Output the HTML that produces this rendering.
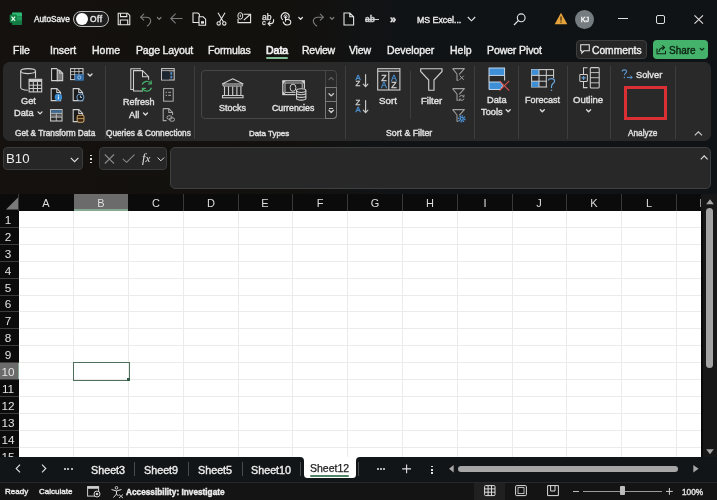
<!DOCTYPE html>
<html><head><meta charset="utf-8"><style>
html,body{margin:0;padding:0;width:717px;height:500px;overflow:hidden;background:#111315}
body{position:relative;font-family:"Liberation Sans", sans-serif}
.t{position:absolute;line-height:1;white-space:nowrap;will-change:transform;-webkit-text-stroke:0.4px currentColor;font-variant-ligatures:none}
svg{overflow:visible}
</style></head><body>
<div style="position:absolute;left:0;top:0;width:717px;height:500px;background:linear-gradient(90deg,#14110e 0%,#13110e 40%,#101316 56%,#0f1316 100%)"></div><svg style="position:absolute;left:9px;top:12px" width="14" height="14" viewBox="0 0 14 14" fill="none">
<rect x="3" y="0.4" width="10" height="12.6" rx="1" fill="#185c37"/>
<rect x="3" y="0.4" width="10" height="4.2" rx="1" fill="#2db873"/>
<rect x="3" y="4.6" width="10" height="4.2" fill="#1f9a5c"/>
<rect x="3" y="8.8" width="10" height="4.2" rx="1" fill="#137a43"/>
<rect x="0.7" y="2.6" width="7.2" height="8.2" rx="0.8" fill="#128245"/>
<path d="M2.5 4.6 L6.1 8.8 M6.1 4.6 L2.5 8.8" stroke="#e8fff0" stroke-width="1.15"/>
</svg><div class="t" style="left:33.71px;top:16.00px;font-size:8.25px;color:#e8e8e8;font-weight:400;transform:scaleX(1.0000);transform-origin:0 0;">AutoSave</div><div style="position:absolute;left:73.3px;top:10.8px;width:35.60px;height:16.20px;box-sizing:border-box;border:1.6px solid #bdbdbd;border-radius:8.1px;background:#1e1e1e"></div><div style="position:absolute;left:76.0px;top:12.9px;width:11.8px;height:11.8px;border-radius:50%;background:#fff"></div><div class="t" style="left:90.10px;top:15.00px;font-size:8.40px;color:#e8e8e8;font-weight:400;transform:scaleX(1.0000);transform-origin:0 0;letter-spacing:0.5px">Off</div><svg style="position:absolute;left:117px;top:12px" width="14" height="14" viewBox="0 0 14 14" fill="none"><path d="M1.2 1.2 H10.6 L12.8 3.4 V12.8 H1.2 Z" stroke="#e6e6e6" stroke-width="1.1"/>
<path d="M3.5 1.2 V4.6 H9.8 V1.2" stroke="#e6e6e6" stroke-width="1.1"/><path d="M3.3 12.8 V8 H10.7 V12.8" stroke="#e6e6e6" stroke-width="1.1"/></svg><svg style="position:absolute;left:139px;top:12px" width="14" height="14" viewBox="0 0 14 14" fill="none"><path d="M1.8 5.2 H7.2 C9.9 5.2 11.7 7 11.7 9.1 C11.7 10.6 11 11.5 9.9 12.6 L8.4 14" stroke="#7c7c7c" stroke-width="1.15" stroke-linecap="round"/><path d="M4.7 2.2 L1.7 5.2 L4.7 8.2" stroke="#7c7c7c" stroke-width="1.15" stroke-linecap="round" stroke-linejoin="round"/></svg><svg style="position:absolute;left:0;top:0" width="717" height="500" fill="none"><path d="M157.40 17.50 L159.20 19.30 L161.00 17.50" stroke="#7c7c7c" stroke-width="1.2" stroke-linecap="round" stroke-linejoin="round"/></svg><svg style="position:absolute;left:170px;top:13px" width="13" height="11" viewBox="0 0 13 11" fill="none"><path d="M0.8 5.5 H12.5 M5.6 0.7 L0.8 5.5 L5.6 10.3" stroke="#7c7c7c" stroke-width="1.1"/></svg><svg style="position:absolute;left:192px;top:12px" width="15" height="14" viewBox="0 0 15 14" fill="none"><path d="M1 1 H6 L7.4 2.4 V10.5 H1 Z" stroke="#e6e6e6" stroke-width="1.1"/>
<path d="M7 4.8 H11.2 L13.6 7.2 V13.2 H7 Z" stroke="#e6e6e6" stroke-width="1.1" fill="#13110e"/><rect x="9" y="9.2" width="3" height="2.4" fill="#e6e6e6"/></svg><svg style="position:absolute;left:216px;top:12px" width="11" height="14" viewBox="0 0 11 14" fill="none"><path d="M2 0.8 L7.5 10 M9 0.8 L3.5 10" stroke="#e6e6e6" stroke-width="1.1"/>
<circle cx="2.7" cy="11.4" r="1.7" stroke="#e6e6e6" stroke-width="1.1"/><circle cx="8.3" cy="11.4" r="1.7" stroke="#e6e6e6" stroke-width="1.1"/></svg><svg style="position:absolute;left:237px;top:12px" width="15" height="12" viewBox="0 0 15 12" fill="none"><path d="M6.6 2.2 H13.6 V10.6 H1 V7" stroke="#e6e6e6" stroke-width="1.1"/><path d="M6.8 8.2 L13.2 2.5" stroke="#e6e6e6" stroke-width="1.1"/>
<rect x="1" y="0.7" width="4.6" height="6.4" rx="2.3" stroke="#e6e6e6" stroke-width="1"/><path d="M3.3 2.6 V5" stroke="#e6e6e6" stroke-width="0.9"/></svg><div class="t" style="left:261.98px;top:13.00px;font-size:8.60px;color:#e6e6e6;font-weight:400;transform:scaleX(1.0000);transform-origin:0 0;-webkit-text-stroke:0.25px #e6e6e6">ab</div><div class="t" style="left:262.34px;top:19.00px;font-size:7.60px;color:#e6e6e6;font-weight:400;transform:scaleX(1.0000);transform-origin:0 0;-webkit-text-stroke:0.25px #e6e6e6">c</div><svg style="position:absolute;left:267px;top:18.5px" width="8" height="7" viewBox="0 0 8 7" fill="none"><path d="M6.6 0.5 V1.8 C6.6 3.6 5.6 4.6 3.8 4.6 H1.2 M3 2.6 L1 4.6 L3 6.6" stroke="#e6e6e6" stroke-width="1.1" stroke-linecap="round" stroke-linejoin="round"/></svg><svg style="position:absolute;left:280px;top:12px" width="13" height="14" viewBox="0 0 13 14" fill="none"><path d="M2.6 7.6 A3.9 3.9 0 1 1 8.8 6.2" stroke="#e6e6e6" stroke-width="1.1" stroke-linecap="round"/><circle cx="5.5" cy="4.4" r="1.5" stroke="#e6e6e6" stroke-width="1"/>
<path d="M5.5 4.6 V9.2 M5.5 7.6 C8 7 10.8 7.6 10.8 10 C10.8 12.2 9.5 13 7.2 13 C5.2 13 3.8 11.6 3.2 10" stroke="#e6e6e6" stroke-width="1.1" stroke-linecap="round"/></svg><svg style="position:absolute;left:0;top:0" width="717" height="500" fill="none"><path d="M298.80 17.50 L300.60 19.30 L302.40 17.50" stroke="#e6e6e6" stroke-width="1.2" stroke-linecap="round" stroke-linejoin="round"/></svg><svg style="position:absolute;left:311px;top:12px" width="14" height="14" viewBox="0 0 14 14" fill="none"><path d="M12.2 5.2 H6.8 C4.1 5.2 2.3 7 2.3 9.1 C2.3 10.6 3 11.5 4.1 12.6 L5.6 14" stroke="#7c7c7c" stroke-width="1.15" stroke-linecap="round"/><path d="M9.3 2.2 L12.3 5.2 L9.3 8.2" stroke="#7c7c7c" stroke-width="1.15" stroke-linecap="round" stroke-linejoin="round"/></svg><svg style="position:absolute;left:0;top:0" width="717" height="500" fill="none"><path d="M330.20 17.50 L332.00 19.30 L333.80 17.50" stroke="#7c7c7c" stroke-width="1.2" stroke-linecap="round" stroke-linejoin="round"/></svg><svg style="position:absolute;left:343px;top:12px" width="12" height="14" viewBox="0 0 12 14" fill="none"><path d="M1 1 H6.8 L10.6 4.8 V13 H1 Z M6.8 1 V4.8 H10.6" stroke="#e6e6e6" stroke-width="1.1"/></svg><div class="t" style="left:365.49px;top:15.00px;font-size:8.50px;color:#cfcfcf;font-weight:700;transform:scaleX(1.0000);transform-origin:0 0;">ab</div><div style="position:absolute;left:364.5px;top:19.2px;width:14.50px;height:1.10px;background:#cfcfcf"></div><div class="t" style="left:390.14px;top:14.00px;font-size:11.00px;color:#e6e6e6;font-weight:700;transform:scaleX(1.0000);transform-origin:0 0;">&#187;</div><div class="t" style="left:417.08px;top:16.00px;font-size:8.75px;color:#e8e8e8;font-weight:400;transform:scaleX(1.0000);transform-origin:0 0;">MS Excel...</div><svg style="position:absolute;left:467px;top:16px" width="10" height="7" viewBox="0 0 10 7" fill="none"><path d="M0.8 1 L4.5 4.8 L8.2 1" stroke="#e6e6e6" stroke-width="1.1"/></svg><svg style="position:absolute;left:513px;top:13px" width="14" height="13" viewBox="0 0 14 13" fill="none"><circle cx="8.2" cy="4.8" r="3.9" stroke="#e6e6e6" stroke-width="1.1"/><path d="M5.3 7.7 L1 12" stroke="#e6e6e6" stroke-width="1.2"/></svg><svg style="position:absolute;left:554px;top:12px" width="14" height="13" viewBox="0 0 14 13" fill="none"><path d="M7 0.8 L13.3 12.2 H0.7 Z" fill="#e5a33b"/><rect x="6.4" y="4.5" width="1.2" height="4.2" fill="#3a2a10"/><rect x="6.4" y="9.6" width="1.2" height="1.2" fill="#3a2a10"/></svg><div style="position:absolute;left:575px;top:9.7px;width:19.4px;height:19.4px;border-radius:50%;background:#767d80"></div><div class="t" style="left:484.60px;width:200px;text-align:center;top:16.00px;font-size:7.20px;color:#f0f0f0;font-weight:400;transform:scaleX(1.0000);transform-origin:50% 0;">KJ</div><div style="position:absolute;left:618px;top:18.3px;width:9.50px;height:1.00px;background:#e0e0e0"></div><div style="position:absolute;left:656px;top:15px;width:9px;height:8.5px;box-sizing:border-box;border:1.1px solid #e0e0e0;border-radius:2px"></div><svg style="position:absolute;left:693.5px;top:14.8px" width="10" height="9" viewBox="0 0 10 9" fill="none"><path d="M0.5 0.3 L9 8.7 M9 0.3 L0.5 8.7" stroke="#e0e0e0" stroke-width="1.1"/></svg><div class="t" style="left:12.97px;top:45.00px;font-size:10.50px;color:#ececec;font-weight:400;transform:scaleX(1.0000);transform-origin:0 0;letter-spacing:0px">File</div><div class="t" style="left:49.97px;top:45.00px;font-size:10.50px;color:#ececec;font-weight:400;transform:scaleX(1.0000);transform-origin:0 0;letter-spacing:0px">Insert</div><div class="t" style="left:91.87px;top:45.00px;font-size:10.50px;color:#ececec;font-weight:400;transform:scaleX(1.0000);transform-origin:0 0;letter-spacing:0px">Home</div><div class="t" style="left:136.07px;top:45.00px;font-size:10.50px;color:#ececec;font-weight:400;transform:scaleX(1.0000);transform-origin:0 0;letter-spacing:-0.17px">Page Layout</div><div class="t" style="left:208.27px;top:45.00px;font-size:10.50px;color:#ececec;font-weight:400;transform:scaleX(1.0000);transform-origin:0 0;letter-spacing:-0.14px">Formulas</div><div class="t" style="left:265.67px;top:45.00px;font-size:10.50px;color:#f4f4f4;font-weight:400;transform:scaleX(1.0000);transform-origin:0 0;letter-spacing:0px;-webkit-text-stroke:0.7px #f4f4f4">Data</div><div class="t" style="left:302.27px;top:45.00px;font-size:10.50px;color:#ececec;font-weight:400;transform:scaleX(1.0000);transform-origin:0 0;letter-spacing:-0.26px">Review</div><div class="t" style="left:349.37px;top:45.00px;font-size:10.50px;color:#ececec;font-weight:400;transform:scaleX(1.0000);transform-origin:0 0;letter-spacing:-0.2px">View</div><div class="t" style="left:386.87px;top:45.00px;font-size:10.50px;color:#ececec;font-weight:400;transform:scaleX(1.0000);transform-origin:0 0;letter-spacing:-0.08px">Developer</div><div class="t" style="left:450.27px;top:45.00px;font-size:10.50px;color:#ececec;font-weight:400;transform:scaleX(1.0000);transform-origin:0 0;letter-spacing:0px">Help</div><div class="t" style="left:487.37px;top:45.00px;font-size:10.50px;color:#ececec;font-weight:400;transform:scaleX(1.0000);transform-origin:0 0;letter-spacing:-0.1px">Power Pivot</div><div style="position:absolute;left:266.3px;top:57.1px;width:21.50px;height:1.90px;background:#80bf96;border-radius:1px"></div><div style="position:absolute;left:576.1px;top:40.1px;width:70.70px;height:18.50px;box-sizing:border-box;border:1px solid #3e3e3e;border-radius:4px;background:#262626"></div><svg style="position:absolute;left:580px;top:44px" width="11" height="11" viewBox="0 0 11 11" fill="none"><path d="M0.7 0.7 H9.3 V6.8 H4 L1.8 9.2 V6.8 H0.7 Z" stroke="#e6e6e6" stroke-width="1.05"/></svg><div class="t" style="left:592.38px;top:46.00px;font-size:10.25px;color:#ececec;font-weight:400;transform:scaleX(1.0000);transform-origin:0 0;">Comments</div><div style="position:absolute;left:653px;top:40.1px;width:54.70px;height:18.50px;border-radius:4px;background:#45b26b"></div><svg style="position:absolute;left:655.5px;top:43.5px" width="11" height="11" viewBox="0 0 11 11" fill="none"><path d="M1 4.5 V9.8 H9.5 V6.8" stroke="#0d2614" stroke-width="1.05"/><path d="M3 8 C3 5 5 3.6 8 3.6 M6.3 1.4 L8.6 3.6 L6.3 5.8" stroke="#0d2614" stroke-width="1.05"/></svg><div class="t" style="left:669.20px;top:46.00px;font-size:10.00px;color:#0e2414;font-weight:400;transform:scaleX(1.0000);transform-origin:0 0;">Share</div><svg style="position:absolute;left:0;top:0" width="717" height="500" fill="none"><path d="M700.20 48.40 L702.00 50.20 L703.80 48.40" stroke="#0e2414" stroke-width="1.2" stroke-linecap="round" stroke-linejoin="round"/></svg><div style="position:absolute;left:3.3px;top:61.7px;width:707.50px;height:78.90px;border-radius:6.5px;background:#292929"></div><div style="position:absolute;left:105.3px;top:65.5px;width:1.00px;height:73.50px;background:#3d3d3d"></div><div style="position:absolute;left:194.0px;top:65.5px;width:1.00px;height:73.50px;background:#3d3d3d"></div><div style="position:absolute;left:345.1px;top:65.5px;width:1.00px;height:73.50px;background:#3d3d3d"></div><div style="position:absolute;left:474.0px;top:65.5px;width:1.00px;height:73.50px;background:#3d3d3d"></div><div style="position:absolute;left:517.9px;top:65.5px;width:1.00px;height:73.50px;background:#3d3d3d"></div><div style="position:absolute;left:566.5px;top:65.5px;width:1.00px;height:73.50px;background:#3d3d3d"></div><div style="position:absolute;left:610.3px;top:65.5px;width:1.00px;height:73.50px;background:#3d3d3d"></div><div style="position:absolute;left:674.8px;top:65.5px;width:1.00px;height:73.50px;background:#3d3d3d"></div><div class="t" style="left:14.81px;top:130.00px;font-size:8.25px;color:#e0e0e0;font-weight:400;transform:scaleX(1.0000);transform-origin:0 0;">Get &amp; Transform Data</div><div class="t" style="left:106.30px;top:130.00px;font-size:8.25px;color:#e0e0e0;font-weight:400;transform:scaleX(1.0000);transform-origin:0 0;">Queries &amp; Connections</div><div class="t" style="left:249.32px;top:130.00px;font-size:8.00px;color:#e0e0e0;font-weight:400;transform:scaleX(1.0000);transform-origin:0 0;">Data Types</div><div class="t" style="left:386.38px;top:129.00px;font-size:8.75px;color:#e0e0e0;font-weight:400;transform:scaleX(1.0000);transform-origin:0 0;">Sort &amp; Filter</div><div class="t" style="left:627.71px;top:130.00px;font-size:8.25px;color:#e0e0e0;font-weight:400;transform:scaleX(1.0000);transform-origin:0 0;">Analyze</div><svg style="position:absolute;left:20px;top:68px" width="23" height="25" viewBox="0 0 23 25" fill="none"><ellipse cx="8.1" cy="3.1" rx="7.4" ry="2.5" stroke="#cfcfcf" stroke-width="1.1"/>
<path d="M0.7 3.1 V19.5 C0.7 21 3.5 22.1 7.8 22.2" stroke="#cfcfcf" stroke-width="1.1"/><path d="M15.5 3.1 V10.2" stroke="#cfcfcf" stroke-width="1.1"/>
<rect x="9.1" y="11.3" width="12.6" height="12.6" fill="#292929" stroke="#cfcfcf" stroke-width="1.1"/>
<rect x="9.1" y="11.3" width="12.6" height="2.6" fill="#cfcfcf"/>
<path d="M9.1 17.2 H21.7 M9.1 20.5 H21.7 M13.3 13.9 V23.9 M17.5 13.9 V23.9" stroke="#cfcfcf" stroke-width="1"/></svg><div class="t" style="left:21.14px;top:97.00px;font-size:9.25px;color:#e0e0e0;font-weight:400;transform:scaleX(1.0000);transform-origin:0 0;">Get</div><div class="t" style="left:14.25px;top:109.00px;font-size:9.25px;color:#e0e0e0;font-weight:400;transform:scaleX(1.0000);transform-origin:0 0;">Data</div><svg style="position:absolute;left:0;top:0" width="717" height="500" fill="none"><path d="M38.00 111.90 L40.00 113.90 L42.00 111.90" stroke="#e0e0e0" stroke-width="1.3" stroke-linecap="round" stroke-linejoin="round"/></svg><svg style="position:absolute;left:51px;top:68px" width="13" height="14" viewBox="0 0 13 14" fill="none"><path d="M0.6 0.6 H5.6 L7 2 V12.6 H0.6 Z" fill="#1a1a1a" stroke="#cfcfcf" stroke-width="1.05"/>
<path d="M6.2 2.2 L8.6 2.2 L11.7 5.3 V12.6 H6.2 Z" fill="#7a7a7a" stroke="#cfcfcf" stroke-width="1.05"/><path d="M8.6 2.2 V5.3 H11.7" stroke="#cfcfcf" stroke-width="0.9"/></svg><svg style="position:absolute;left:50.4px;top:88.2px" width="14" height="14" viewBox="0 0 14 14" fill="none"><path d="M1.2 0.6 H6.8 L10.6 4.4 V12.6 H1.2 Z" fill="#1a1a1a" stroke="#cfcfcf" stroke-width="1.05"/><path d="M6.8 0.6 V4.4 H10.6" stroke="#cfcfcf" stroke-width="1.05"/><circle cx="8.4" cy="9.2" r="3.7" fill="#3a8ad0"/><rect x="7.9" y="6.9" width="1" height="1" fill="#dfefff"/><rect x="7.9" y="8.4" width="1" height="3" fill="#dfefff"/></svg><svg style="position:absolute;left:50.2px;top:108.8px" width="13" height="13" viewBox="0 0 13 13" fill="none"><rect x="0.6" y="0.6" width="11.4" height="11.4" stroke="#cfcfcf" stroke-width="1.05"/><rect x="1.1" y="1.1" width="10.4" height="3" fill="#3d6a90"/>
<rect x="1.1" y="5.4" width="10.4" height="2.6" fill="#6a6a6a"/><path d="M0.6 4.4 H12 M0.6 8.2 H12 M6.3 4.4 V12" stroke="#d0d0d0" stroke-width="0.8"/></svg><svg style="position:absolute;left:70.4px;top:68.4px" width="15" height="14" viewBox="0 0 15 14" fill="none"><rect x="0.6" y="0.6" width="12.4" height="11" fill="#1a1a1a" stroke="#cfcfcf" stroke-width="1.05"/><path d="M0.6 3.6 H13 M0.6 6.6 H13 M4.7 0.6 V11.6 M8.9 0.6 V11.6" stroke="#cfcfcf" stroke-width="0.8"/>
<rect x="4.8" y="6.2" width="9" height="6.5" rx="0.8" fill="#2f6aa6"/><circle cx="9.3" cy="9.5" r="1.6" stroke="#a9cdef" stroke-width="0.9"/></svg><svg style="position:absolute;left:0;top:0" width="717" height="500" fill="none"><path d="M88.00 74.00 L90.00 76.00 L92.00 74.00" stroke="#e0e0e0" stroke-width="1.3" stroke-linecap="round" stroke-linejoin="round"/></svg><svg style="position:absolute;left:71.5px;top:88.2px" width="14" height="14" viewBox="0 0 14 14" fill="none"><path d="M1.2 0.6 H6.8 L10.6 4.4 V12.6 H1.2 Z" fill="#1a1a1a" stroke="#cfcfcf" stroke-width="1.05"/><path d="M6.8 0.6 V4.4 H10.6" stroke="#cfcfcf" stroke-width="1.05"/><circle cx="8.4" cy="9.3" r="3.4" fill="#1a1a1a" stroke="#6ea2cf" stroke-width="1.05"/><path d="M8.4 7.6 V9.4 H10" stroke="#cfe3f5" stroke-width="0.9"/></svg><svg style="position:absolute;left:72px;top:108.6px" width="14" height="14" viewBox="0 0 14 14" fill="none"><path d="M1.2 0.6 H6.8 L10.6 4.4 V12.6 H1.2 Z" fill="#1a1a1a" stroke="#cfcfcf" stroke-width="1.05"/><path d="M6.8 0.6 V4.4 H10.6" stroke="#cfcfcf" stroke-width="1.05"/><rect x="5.2" y="6.2" width="6.8" height="7" rx="1.6" fill="#3a2410" stroke="#c9a468" stroke-width="1.05"/><path d="M5.2 9.6 H12" stroke="#c9a468" stroke-width="0.9"/></svg><svg style="position:absolute;left:129.5px;top:68px" width="25" height="25" viewBox="0 0 25 25" fill="none"><path d="M3 21.5 H0.8 V0.8 H11" stroke="#cfcfcf" stroke-width="1.05"/>
<path d="M3.5 2.6 H12.5 L18.6 8.7 V23 H3.5 Z" stroke="#cfcfcf" stroke-width="1.05" fill="#292929"/><path d="M12.5 2.6 V8.7 H18.6" stroke="#cfcfcf" stroke-width="1.05"/>
<circle cx="16.8" cy="18.2" r="6.8" fill="#292929"/>
<path d="M12.2 16.6 A4.8 4.8 0 0 1 20.9 15.6 M21.4 19.8 A4.8 4.8 0 0 1 12.7 20.8" stroke="#47b36a" stroke-width="1.2"/>
<path d="M21.2 12.4 V16 H17.7 M12.4 24 V20.4 H15.9" stroke="#47b36a" stroke-width="1.15"/></svg><div class="t" style="left:123.16px;top:98.00px;font-size:9.00px;color:#e0e0e0;font-weight:400;transform:scaleX(1.0000);transform-origin:0 0;">Refresh</div><div class="t" style="left:129.25px;top:111.00px;font-size:9.25px;color:#e0e0e0;font-weight:400;transform:scaleX(1.0000);transform-origin:0 0;">All</div><svg style="position:absolute;left:0;top:0" width="717" height="500" fill="none"><path d="M143.50 113.00 L145.50 115.00 L147.50 113.00" stroke="#e0e0e0" stroke-width="1.3" stroke-linecap="round" stroke-linejoin="round"/></svg><svg style="position:absolute;left:161px;top:67.8px" width="14" height="13" viewBox="0 0 14 13" fill="none"><rect x="0.6" y="0.6" width="12.6" height="11.4" stroke="#c8c8c8" stroke-width="1.05"/><path d="M0.6 2.8 H13.2" stroke="#c8c8c8" stroke-width="1"/><rect x="1.1" y="3.3" width="7" height="8.2" fill="#1c2630"/><rect x="9.4" y="4.2" width="1.8" height="2.6" fill="#4f8fcf"/><rect x="9.4" y="7.8" width="1.8" height="2.6" fill="#4f8fcf"/></svg><svg style="position:absolute;left:162.5px;top:87.8px" width="11" height="14" viewBox="0 0 11 14" fill="none"><rect x="0.6" y="0.6" width="9.6" height="12.6" stroke="#a8a8a8" stroke-width="1.05"/><path d="M2.6 4.3 H4 M2.6 7.3 H4 M5.2 4.3 H8 M5.2 7.3 H8" stroke="#a8a8a8" stroke-width="1"/></svg><svg style="position:absolute;left:161.5px;top:108.4px" width="14" height="14" viewBox="0 0 14 14" fill="none"><path d="M1.2 0.6 H6.8 L10.6 4.4 V7 M4.5 12.6 H1.2 V0.6 M6.8 0.6 V4.4 H10.6" stroke="#a8a8a8" stroke-width="1.05"/><rect x="5" y="7.8" width="5" height="3.4" rx="1.7" stroke="#a8a8a8" stroke-width="1"/><rect x="7.5" y="9.8" width="5" height="3.4" rx="1.7" stroke="#a8a8a8" stroke-width="1"/></svg><div style="position:absolute;left:201.2px;top:70.3px;width:136.10px;height:48.50px;box-sizing:border-box;border:1px solid #474747;border-radius:4px"></div><div style="position:absolute;left:325px;top:70.3px;width:12.30px;height:48.50px;box-sizing:border-box;border-left:1px solid #474747"></div><div style="position:absolute;left:325px;top:86.8px;width:12.30px;height:15.40px;box-sizing:border-box;border:1px solid #7a7a7a;background:#2d2d2d"></div><div style="position:absolute;left:325px;top:102.2px;width:12.30px;height:16.60px;box-sizing:border-box;border:1px solid #7a7a7a;border-top:none;border-radius:0 0 4px 0"></div><svg style="position:absolute;left:0;top:0" width="717" height="500" fill="none"><path d="M328.90 79.75 L331.20 77.45 L333.50 79.75" stroke="#5c5c5c" stroke-width="1.1" stroke-linecap="round" stroke-linejoin="round"/></svg><svg style="position:absolute;left:0;top:0" width="717" height="500" fill="none"><path d="M329.00 93.70 L331.20 95.90 L333.40 93.70" stroke="#cfcfcf" stroke-width="1.3" stroke-linecap="round" stroke-linejoin="round"/></svg><div style="position:absolute;left:328.9px;top:107.6px;width:4.60px;height:1.20px;background:#cfcfcf"></div><svg style="position:absolute;left:0;top:0" width="717" height="500" fill="none"><path d="M329.00 110.30 L331.20 112.50 L333.40 110.30" stroke="#cfcfcf" stroke-width="1.3" stroke-linecap="round" stroke-linejoin="round"/></svg><svg style="position:absolute;left:220.5px;top:78px" width="24" height="21" viewBox="0 0 24 21" fill="none"><path d="M11.7 0.8 L22.3 6 H1.1 Z" stroke="#cfcfcf" stroke-width="1.1"/><path d="M2 6.5 V8 H21.4 V6.5" stroke="#cfcfcf" stroke-width="1"/>
<path d="M3.5 8.5 V17 M7.5 8.5 V17 M11.7 8.5 V17 M15.9 8.5 V17 M19.9 8.5 V17" stroke="#cfcfcf" stroke-width="1.1"/>
<path d="M1.5 17.5 H22 V19.8 H1.5 Z" stroke="#cfcfcf" stroke-width="1.1"/></svg><div class="t" style="left:219.16px;top:104.00px;font-size:9.00px;color:#e0e0e0;font-weight:400;transform:scaleX(1.0000);transform-origin:0 0;">Stocks</div><svg style="position:absolute;left:282px;top:80px" width="26" height="22" viewBox="0 0 26 22" fill="none"><rect x="0.8" y="0.8" width="21.6" height="13.8" stroke="#cfcfcf" stroke-width="1.2"/>
<path d="M0.8 0.8 H4.2 L0.8 4.2 Z M22.4 0.8 H19 L22.4 4.2 Z M0.8 14.6 H4.2 L0.8 11.2 Z" fill="#cfcfcf"/>
<rect x="3" y="3" width="17.2" height="9.4" stroke="#cfcfcf" stroke-width="0.9"/>
<ellipse cx="11" cy="7.7" rx="2.9" ry="3.6" stroke="#cfcfcf" stroke-width="1"/>
<rect x="13.5" y="8.4" width="11.5" height="13" rx="4" fill="#292929"/>
<ellipse cx="19.2" cy="10.6" rx="4.7" ry="1.8" stroke="#cfcfcf" stroke-width="1.05"/><path d="M14.5 10.6 V18.6 C14.5 20.6 23.9 20.6 23.9 18.6 V10.6 M14.5 13.3 C14.5 15.1 23.9 15.1 23.9 13.3 M14.5 16 C14.5 17.8 23.9 17.8 23.9 16" stroke="#cfcfcf" stroke-width="1.05"/></svg><div class="t" style="left:272.08px;top:104.00px;font-size:8.75px;color:#e0e0e0;font-weight:400;transform:scaleX(1.0000);transform-origin:0 0;">Currencies</div><div class="t" style="left:258.20px;width:200px;text-align:center;top:74.00px;font-size:7.80px;color:#4a8fd0;font-weight:400;transform:scaleX(1.0000);transform-origin:50% 0;-webkit-text-stroke:0.35px #4a8fd0">A</div><div class="t" style="left:258.20px;width:200px;text-align:center;top:80.00px;font-size:7.80px;color:#cfcfcf;font-weight:400;transform:scaleX(1.0000);transform-origin:50% 0;-webkit-text-stroke:0.35px #cfcfcf">Z</div><svg style="position:absolute;left:363.40000000000003px;top:74px" width="6" height="14" viewBox="0 0 6 14" fill="none"><path d="M2.6 0.5 V12.6 M0.3 10.2 L2.6 12.6 L4.9 10.2" stroke="#cfcfcf" stroke-width="1.1" stroke-linecap="round"/></svg><div class="t" style="left:258.20px;width:200px;text-align:center;top:99.00px;font-size:7.80px;color:#cfcfcf;font-weight:400;transform:scaleX(1.0000);transform-origin:50% 0;-webkit-text-stroke:0.35px #cfcfcf">Z</div><div class="t" style="left:258.20px;width:200px;text-align:center;top:106.00px;font-size:7.80px;color:#4a8fd0;font-weight:400;transform:scaleX(1.0000);transform-origin:50% 0;-webkit-text-stroke:0.35px #4a8fd0">A</div><svg style="position:absolute;left:363.40000000000003px;top:99.5px" width="6" height="14" viewBox="0 0 6 14" fill="none"><path d="M2.6 0.5 V12.6 M0.3 10.2 L2.6 12.6 L4.9 10.2" stroke="#cfcfcf" stroke-width="1.1" stroke-linecap="round"/></svg><svg style="position:absolute;left:377px;top:68px" width="24" height="24" viewBox="0 0 24 24" fill="none"><rect x="0.7" y="0.7" width="22.2" height="21.3" stroke="#cfcfcf" stroke-width="1.1"/><path d="M0.7 3.2 H22.9" stroke="#cfcfcf" stroke-width="1.1"/><path d="M11.8 3.2 V22" stroke="#cfcfcf" stroke-width="1.1"/></svg><div class="t" style="left:283.80px;width:200px;text-align:center;top:74.00px;font-size:8.80px;color:#cfcfcf;font-weight:400;transform:scaleX(1.0000);transform-origin:50% 0;-webkit-text-stroke:0.3px #cfcfcf">Z</div><div class="t" style="left:283.80px;width:200px;text-align:center;top:81.00px;font-size:8.80px;color:#4a8fd0;font-weight:400;transform:scaleX(1.0000);transform-origin:50% 0;-webkit-text-stroke:0.3px #4a8fd0">A</div><div class="t" style="left:294.40px;width:200px;text-align:center;top:74.00px;font-size:8.80px;color:#4a8fd0;font-weight:400;transform:scaleX(1.0000);transform-origin:50% 0;-webkit-text-stroke:0.3px #4a8fd0">A</div><div class="t" style="left:294.40px;width:200px;text-align:center;top:81.00px;font-size:8.80px;color:#cfcfcf;font-weight:400;transform:scaleX(1.0000);transform-origin:50% 0;-webkit-text-stroke:0.3px #cfcfcf">Z</div><div class="t" style="left:379.42px;top:96.00px;font-size:9.75px;color:#e0e0e0;font-weight:400;transform:scaleX(1.0000);transform-origin:0 0;">Sort</div><div style="position:absolute;left:409.5px;top:70.7px;width:1.00px;height:48.80px;background:#3d3d3d"></div><svg style="position:absolute;left:419.5px;top:68px" width="23" height="23" viewBox="0 0 23 23" fill="none"><path d="M0.7 0.7 H22 V3.5 L14 12 V22.2 H8.7 V12 L0.7 3.5 Z" stroke="#cfcfcf" stroke-width="1.15"/></svg><div class="t" style="left:421.03px;top:96.00px;font-size:9.50px;color:#e0e0e0;font-weight:400;transform:scaleX(1.0000);transform-origin:0 0;">Filter</div><svg style="position:absolute;left:452px;top:67.8px" width="15" height="14" viewBox="0 0 15 14" fill="none"><path d="M0.6 0.6 H12.4 L7.2 6.4 M0.6 0.6 L5 6 V12.2 H6.6" stroke="#a0a0a0" stroke-width="1.05" stroke-linejoin="round"/><path d="M7.6 7.6 L11.8 11.8 M11.8 7.6 L7.6 11.8" stroke="#a0a0a0" stroke-width="1"/></svg><svg style="position:absolute;left:452px;top:88.3px" width="15" height="14" viewBox="0 0 15 14" fill="none"><path d="M0.6 0.6 H12.4 L7.2 6.4 M0.6 0.6 L5 6 V12.2 H6.6" stroke="#a0a0a0" stroke-width="1.05" stroke-linejoin="round"/><path d="M7.4 9.2 A2.4 2.4 0 0 1 11.8 8.6 M12 10.6 A2.4 2.4 0 0 1 7.6 11.2" stroke="#a0a0a0" stroke-width="1"/><path d="M12 6.8 V8.8 H10.2 M7.4 13 V11 H9.2" stroke="#a0a0a0" stroke-width="0.9"/></svg><svg style="position:absolute;left:452px;top:109.2px" width="15" height="14" viewBox="0 0 15 14" fill="none"><path d="M0.6 0.6 H12.4 L7.2 6.4 M0.6 0.6 L5 6 V12.2 H6.6" stroke="#a0a0a0" stroke-width="1.05" stroke-linejoin="round"/><circle cx="9.8" cy="9.8" r="2.9" fill="none" stroke="#4a93d6" stroke-width="1.6" stroke-dasharray="1.3 0.9"/><circle cx="9.8" cy="9.8" r="2.1" fill="#4a93d6"/><circle cx="9.8" cy="9.8" r="0.9" fill="#292929"/></svg><svg style="position:absolute;left:487.5px;top:66.5px" width="23" height="25" viewBox="0 0 23 25" fill="none"><rect x="1" y="1" width="15.6" height="7.4" fill="#3f8fd6" stroke="#cfe3f5" stroke-width="0.9"/>
<path d="M1 8.4 V15 M16.6 8.4 V13.5" stroke="#cfcfcf" stroke-width="1.1"/>
<path d="M1 15 H12.3 L14.8 18.5 L12.3 22.5 H1 Z" fill="#3f8fd6" stroke="#cfe3f5" stroke-width="0.9"/>
<path d="M11.5 13.8 L21.2 23.6 M21.2 13.8 L11.5 23.6" stroke="#d9534f" stroke-width="1.05"/></svg><div class="t" style="left:486.64px;top:96.00px;font-size:9.25px;color:#e0e0e0;font-weight:400;transform:scaleX(1.0000);transform-origin:0 0;">Data</div><div class="t" style="left:480.75px;top:108.00px;font-size:9.25px;color:#e0e0e0;font-weight:400;transform:scaleX(1.0000);transform-origin:0 0;">Tools</div><svg style="position:absolute;left:0;top:0" width="717" height="500" fill="none"><path d="M506.20 109.80 L508.20 111.80 L510.20 109.80" stroke="#e0e0e0" stroke-width="1.3" stroke-linecap="round" stroke-linejoin="round"/></svg><svg style="position:absolute;left:531px;top:68.5px" width="26" height="23" viewBox="0 0 26 23" fill="none"><rect x="0.6" y="0.6" width="22" height="17.4" stroke="#cfcfcf" stroke-width="1.05"/>
<rect x="0.6" y="0.6" width="7.4" height="5.8" fill="#3f8fd6"/><rect x="0.6" y="12.2" width="7.4" height="5.8" fill="#3f8fd6"/>
<path d="M0.6 6.4 H22.6 M0.6 12.2 H16 M8 0.6 V18 M15.3 0.6 V18" stroke="#cfcfcf" stroke-width="1"/>
<rect x="16.2" y="9" width="9" height="14" fill="#292929"/>
<path d="M17.4 11.6 C17.4 8.9 23.6 8.9 23.6 11.9 C23.6 14.3 20.5 14.3 20.5 17.5 V19" stroke="#6aa6dc" stroke-width="1.15"/><circle cx="20.5" cy="21.2" r="0.8" fill="#6aa6dc"/></svg><div class="t" style="left:525.16px;top:96.00px;font-size:9.00px;color:#e0e0e0;font-weight:400;transform:scaleX(1.0000);transform-origin:0 0;">Forecast</div><svg style="position:absolute;left:0;top:0" width="717" height="500" fill="none"><path d="M540.30 109.70 L542.30 111.70 L544.30 109.70" stroke="#e0e0e0" stroke-width="1.3" stroke-linecap="round" stroke-linejoin="round"/></svg><svg style="position:absolute;left:578.5px;top:66.5px" width="21" height="22" viewBox="0 0 21 22" fill="none"><rect x="11.3" y="0.6" width="8.9" height="20.3" rx="1" stroke="#cfcfcf" stroke-width="1.05"/><path d="M11.3 5.6 H20.2 M11.3 10.7 H20.2 M11.3 15.8 H20.2" stroke="#cfcfcf" stroke-width="0.9"/>
<path d="M8.5 0.8 H4.5 V7.2 M4.5 14.5 V20.6 H8.5" stroke="#cfcfcf" stroke-width="1.05"/>
<rect x="0.8" y="7.4" width="7.6" height="7" rx="0.6" fill="#292929" stroke="#cfcfcf" stroke-width="1.05"/><path d="M4.6 8.9 V12.9 M2.6 10.9 H6.6" stroke="#6aa6dc" stroke-width="1.1"/></svg><div class="t" style="left:572.93px;top:95.00px;font-size:9.50px;color:#e0e0e0;font-weight:400;transform:scaleX(1.0000);transform-origin:0 0;">Outline</div><svg style="position:absolute;left:0;top:0" width="717" height="500" fill="none"><path d="M586.60 109.70 L588.60 111.70 L590.60 109.70" stroke="#e0e0e0" stroke-width="1.3" stroke-linecap="round" stroke-linejoin="round"/></svg><svg style="position:absolute;left:620.5px;top:69px" width="13" height="11" viewBox="0 0 13 11" fill="none"><path d="M1.2 2.6 C1.2 0.4 5.6 0.3 5.6 2.6 C5.6 4.2 3.4 4.2 3.4 6.2" stroke="#5b9bd5" stroke-width="1.1"/><circle cx="3.4" cy="8.6" r="0.75" fill="#5b9bd5"/><path d="M6 8.4 H11.2 M9.4 6.6 L11.2 8.4 L9.4 10.2" stroke="#5b9bd5" stroke-width="1"/></svg><div class="t" style="left:636.05px;top:71.00px;font-size:9.25px;color:#e0e0e0;font-weight:400;transform:scaleX(1.0000);transform-origin:0 0;">Solver</div><div style="position:absolute;left:623.5px;top:85.9px;width:43.50px;height:33.90px;box-sizing:border-box;border:3.2px solid #da3035"></div><svg style="position:absolute;left:693.5px;top:131px" width="9" height="5" viewBox="0 0 9 5" fill="none"><path d="M0.8 4.3 L4.4 0.8 L8 4.3" stroke="#cfcfcf" stroke-width="1.1"/></svg><div style="position:absolute;left:3px;top:147px;width:80.00px;height:22.60px;box-sizing:border-box;border:1px solid #3b3b3b;border-radius:4px;background:#262626"></div><div class="t" style="left:6.21px;top:152.00px;font-size:13.25px;color:#ededed;font-weight:400;transform:scaleX(1.0000);transform-origin:0 0;-webkit-text-stroke:0">B10</div><svg style="position:absolute;left:70px;top:156.5px" width="10" height="6" viewBox="0 0 10 6" fill="none"><path d="M0.8 0.8 L4.6 4.6 L8.4 0.8" stroke="#e0e0e0" stroke-width="1.1"/></svg><div style="position:absolute;left:90.3px;top:154.5px;width:1.60px;height:1.60px;background:#e0e0e0"></div><div style="position:absolute;left:90.3px;top:158.2px;width:1.60px;height:1.60px;background:#e0e0e0"></div><div style="position:absolute;left:90.3px;top:161.9px;width:1.60px;height:1.60px;background:#e0e0e0"></div><div style="position:absolute;left:99.2px;top:147px;width:67.80px;height:22.60px;box-sizing:border-box;border:1px solid #3b3b3b;border-radius:4px;background:#262626"></div><svg style="position:absolute;left:104px;top:153.5px" width="11" height="10" viewBox="0 0 11 10" fill="none"><path d="M0.8 0.5 L10 9.5 M10 0.5 L0.8 9.5" stroke="#8a8a8a" stroke-width="1.05"/></svg><svg style="position:absolute;left:121.5px;top:154px" width="13" height="9" viewBox="0 0 13 9" fill="none"><path d="M0.8 4.8 L4.6 8.3 L12.5 0.6" stroke="#8a8a8a" stroke-width="1.05"/></svg><div class="t" style="left:141.5px;top:151.5px;font-family:'Liberation Serif',serif;font-style:italic;font-size:12.5px;color:#e0e0e0;-webkit-text-stroke:0">f<span style="font-size:11px">x</span></div><svg style="position:absolute;left:157px;top:156.5px" width="8" height="5" viewBox="0 0 8 5" fill="none"><path d="M0.6 0.6 L3.8 3.8 L7 0.6" stroke="#e0e0e0" stroke-width="1"/></svg><div style="position:absolute;left:169.6px;top:147.3px;width:541.30px;height:41.30px;box-sizing:border-box;border:1px solid #3d3f41;border-radius:5px;background:#282828"></div><svg style="position:absolute;left:699.5px;top:154.5px" width="9" height="5" viewBox="0 0 9 5" fill="none"><path d="M0.8 4.3 L4.2 0.8 L7.6 4.3" stroke="#e0e0e0" stroke-width="1.1"/></svg><div style="position:absolute;left:0px;top:194.2px;width:701.40px;height:16.40px;background:#0b0b0b"></div><div style="position:absolute;left:0px;top:210.6px;width:18.80px;height:246.30px;background:#0b0b0b"></div><div style="position:absolute;left:18.8px;top:210.6px;width:682.60px;height:246.30px;background:#ffffff"></div><div style="position:absolute;left:73.10px;top:210.6px;width:1px;height:246.30px;background:#ebebeb"></div><div style="position:absolute;left:127.90px;top:210.6px;width:1px;height:246.30px;background:#ebebeb"></div><div style="position:absolute;left:182.70px;top:210.6px;width:1px;height:246.30px;background:#ebebeb"></div><div style="position:absolute;left:237.50px;top:210.6px;width:1px;height:246.30px;background:#ebebeb"></div><div style="position:absolute;left:292.30px;top:210.6px;width:1px;height:246.30px;background:#ebebeb"></div><div style="position:absolute;left:347.10px;top:210.6px;width:1px;height:246.30px;background:#ebebeb"></div><div style="position:absolute;left:401.90px;top:210.6px;width:1px;height:246.30px;background:#ebebeb"></div><div style="position:absolute;left:456.70px;top:210.6px;width:1px;height:246.30px;background:#ebebeb"></div><div style="position:absolute;left:511.50px;top:210.6px;width:1px;height:246.30px;background:#ebebeb"></div><div style="position:absolute;left:566.30px;top:210.6px;width:1px;height:246.30px;background:#ebebeb"></div><div style="position:absolute;left:621.10px;top:210.6px;width:1px;height:246.30px;background:#ebebeb"></div><div style="position:absolute;left:675.90px;top:210.6px;width:1px;height:246.30px;background:#ebebeb"></div><div style="position:absolute;left:18.8px;top:226.99px;width:682.60px;height:1px;background:#ebebeb"></div><div style="position:absolute;left:18.8px;top:243.88px;width:682.60px;height:1px;background:#ebebeb"></div><div style="position:absolute;left:18.8px;top:260.77px;width:682.60px;height:1px;background:#ebebeb"></div><div style="position:absolute;left:18.8px;top:277.66px;width:682.60px;height:1px;background:#ebebeb"></div><div style="position:absolute;left:18.8px;top:294.55px;width:682.60px;height:1px;background:#ebebeb"></div><div style="position:absolute;left:18.8px;top:311.44px;width:682.60px;height:1px;background:#ebebeb"></div><div style="position:absolute;left:18.8px;top:328.33px;width:682.60px;height:1px;background:#ebebeb"></div><div style="position:absolute;left:18.8px;top:345.22px;width:682.60px;height:1px;background:#ebebeb"></div><div style="position:absolute;left:18.8px;top:362.11px;width:682.60px;height:1px;background:#ebebeb"></div><div style="position:absolute;left:18.8px;top:379.00px;width:682.60px;height:1px;background:#ebebeb"></div><div style="position:absolute;left:18.8px;top:395.89px;width:682.60px;height:1px;background:#ebebeb"></div><div style="position:absolute;left:18.8px;top:412.78px;width:682.60px;height:1px;background:#ebebeb"></div><div style="position:absolute;left:18.8px;top:429.67px;width:682.60px;height:1px;background:#ebebeb"></div><div style="position:absolute;left:18.8px;top:446.56px;width:682.60px;height:1px;background:#ebebeb"></div><div style="position:absolute;left:182.7px;top:194.2px;width:1.00px;height:16.40px;background:#383838"></div><div style="position:absolute;left:237.5px;top:194.2px;width:1.00px;height:16.40px;background:#383838"></div><div style="position:absolute;left:292.3px;top:194.2px;width:1.00px;height:16.40px;background:#383838"></div><div style="position:absolute;left:347.1px;top:194.2px;width:1.00px;height:16.40px;background:#383838"></div><div style="position:absolute;left:401.9px;top:194.2px;width:1.00px;height:16.40px;background:#383838"></div><div style="position:absolute;left:456.7px;top:194.2px;width:1.00px;height:16.40px;background:#383838"></div><div style="position:absolute;left:511.5px;top:194.2px;width:1.00px;height:16.40px;background:#383838"></div><div style="position:absolute;left:566.3px;top:194.2px;width:1.00px;height:16.40px;background:#383838"></div><div style="position:absolute;left:621.1px;top:194.2px;width:1.00px;height:16.40px;background:#383838"></div><div style="position:absolute;left:675.9px;top:194.2px;width:1.00px;height:16.40px;background:#383838"></div><div style="position:absolute;left:18.3px;top:194.2px;width:1.00px;height:16.40px;background:#383838"></div><div style="position:absolute;left:0px;top:226.99px;width:18.80px;height:1.00px;background:#3c3c3c"></div><div style="position:absolute;left:0px;top:243.88px;width:18.80px;height:1.00px;background:#3c3c3c"></div><div style="position:absolute;left:0px;top:260.77px;width:18.80px;height:1.00px;background:#3c3c3c"></div><div style="position:absolute;left:0px;top:277.66px;width:18.80px;height:1.00px;background:#3c3c3c"></div><div style="position:absolute;left:0px;top:294.55px;width:18.80px;height:1.00px;background:#3c3c3c"></div><div style="position:absolute;left:0px;top:311.44px;width:18.80px;height:1.00px;background:#3c3c3c"></div><div style="position:absolute;left:0px;top:328.33px;width:18.80px;height:1.00px;background:#3c3c3c"></div><div style="position:absolute;left:0px;top:345.22px;width:18.80px;height:1.00px;background:#3c3c3c"></div><div style="position:absolute;left:0px;top:362.11px;width:18.80px;height:1.00px;background:#3c3c3c"></div><div style="position:absolute;left:0px;top:379.0px;width:18.80px;height:1.00px;background:#3c3c3c"></div><div style="position:absolute;left:0px;top:395.89px;width:18.80px;height:1.00px;background:#3c3c3c"></div><div style="position:absolute;left:0px;top:412.78px;width:18.80px;height:1.00px;background:#3c3c3c"></div><div style="position:absolute;left:0px;top:429.67px;width:18.80px;height:1.00px;background:#3c3c3c"></div><div style="position:absolute;left:0px;top:446.56px;width:18.80px;height:1.00px;background:#3c3c3c"></div><div style="position:absolute;left:73.6px;top:194.2px;width:54.80px;height:16.40px;background:#6b6b6b"></div><div style="position:absolute;left:73.6px;top:209.29999999999998px;width:54.80px;height:1.30px;background:#86a892"></div><div style="position:absolute;left:0px;top:362.61px;width:18.80px;height:16.89px;background:#6b6b6b"></div><div style="position:absolute;left:17.5px;top:362.61px;width:1.30px;height:16.89px;background:#86a892"></div><svg style="position:absolute;left:4.5px;top:197px" width="14" height="13" viewBox="0 0 14 13" fill="none"><path d="M13 0.5 V12.5 H1 Z" fill="#7a7a7a"/></svg><div class="t" style="left:-53.80px;width:200px;text-align:center;top:198.00px;font-size:11.00px;color:#dedede;font-weight:400;transform:scaleX(1.0000);transform-origin:50% 0;-webkit-text-stroke:0">A</div><div class="t" style="left:1.00px;width:200px;text-align:center;top:198.00px;font-size:11.00px;color:#dedede;font-weight:400;transform:scaleX(1.0000);transform-origin:50% 0;-webkit-text-stroke:0">B</div><div class="t" style="left:55.80px;width:200px;text-align:center;top:198.00px;font-size:11.00px;color:#dedede;font-weight:400;transform:scaleX(1.0000);transform-origin:50% 0;-webkit-text-stroke:0">C</div><div class="t" style="left:110.60px;width:200px;text-align:center;top:198.00px;font-size:11.00px;color:#dedede;font-weight:400;transform:scaleX(1.0000);transform-origin:50% 0;-webkit-text-stroke:0">D</div><div class="t" style="left:165.40px;width:200px;text-align:center;top:198.00px;font-size:11.00px;color:#dedede;font-weight:400;transform:scaleX(1.0000);transform-origin:50% 0;-webkit-text-stroke:0">E</div><div class="t" style="left:220.20px;width:200px;text-align:center;top:198.00px;font-size:11.00px;color:#dedede;font-weight:400;transform:scaleX(1.0000);transform-origin:50% 0;-webkit-text-stroke:0">F</div><div class="t" style="left:275.00px;width:200px;text-align:center;top:198.00px;font-size:11.00px;color:#dedede;font-weight:400;transform:scaleX(1.0000);transform-origin:50% 0;-webkit-text-stroke:0">G</div><div class="t" style="left:329.80px;width:200px;text-align:center;top:198.00px;font-size:11.00px;color:#dedede;font-weight:400;transform:scaleX(1.0000);transform-origin:50% 0;-webkit-text-stroke:0">H</div><div class="t" style="left:384.60px;width:200px;text-align:center;top:198.00px;font-size:11.00px;color:#dedede;font-weight:400;transform:scaleX(1.0000);transform-origin:50% 0;-webkit-text-stroke:0">I</div><div class="t" style="left:439.40px;width:200px;text-align:center;top:198.00px;font-size:11.00px;color:#dedede;font-weight:400;transform:scaleX(1.0000);transform-origin:50% 0;-webkit-text-stroke:0">J</div><div class="t" style="left:494.20px;width:200px;text-align:center;top:198.00px;font-size:11.00px;color:#dedede;font-weight:400;transform:scaleX(1.0000);transform-origin:50% 0;-webkit-text-stroke:0">K</div><div class="t" style="left:549.00px;width:200px;text-align:center;top:198.00px;font-size:11.00px;color:#dedede;font-weight:400;transform:scaleX(1.0000);transform-origin:50% 0;-webkit-text-stroke:0">L</div><div class="t" style="left:603.80px;width:200px;text-align:center;top:198.00px;font-size:11.00px;color:#dedede;font-weight:400;transform:scaleX(1.0000);transform-origin:50% 0;-webkit-text-stroke:0">M</div><div class="t" style="left:-92.00px;width:200px;text-align:center;top:214.00px;font-size:11.75px;color:#e2e2e2;font-weight:400;transform:scaleX(1.0000);transform-origin:50% 0;-webkit-text-stroke:0">1</div><div class="t" style="left:-92.00px;width:200px;text-align:center;top:231.00px;font-size:11.75px;color:#e2e2e2;font-weight:400;transform:scaleX(1.0000);transform-origin:50% 0;-webkit-text-stroke:0">2</div><div class="t" style="left:-92.00px;width:200px;text-align:center;top:248.00px;font-size:11.75px;color:#e2e2e2;font-weight:400;transform:scaleX(1.0000);transform-origin:50% 0;-webkit-text-stroke:0">3</div><div class="t" style="left:-92.00px;width:200px;text-align:center;top:265.00px;font-size:11.75px;color:#e2e2e2;font-weight:400;transform:scaleX(1.0000);transform-origin:50% 0;-webkit-text-stroke:0">4</div><div class="t" style="left:-92.00px;width:200px;text-align:center;top:282.00px;font-size:11.75px;color:#e2e2e2;font-weight:400;transform:scaleX(1.0000);transform-origin:50% 0;-webkit-text-stroke:0">5</div><div class="t" style="left:-92.00px;width:200px;text-align:center;top:298.00px;font-size:11.75px;color:#e2e2e2;font-weight:400;transform:scaleX(1.0000);transform-origin:50% 0;-webkit-text-stroke:0">6</div><div class="t" style="left:-92.00px;width:200px;text-align:center;top:315.00px;font-size:11.75px;color:#e2e2e2;font-weight:400;transform:scaleX(1.0000);transform-origin:50% 0;-webkit-text-stroke:0">7</div><div class="t" style="left:-92.00px;width:200px;text-align:center;top:332.00px;font-size:11.75px;color:#e2e2e2;font-weight:400;transform:scaleX(1.0000);transform-origin:50% 0;-webkit-text-stroke:0">8</div><div class="t" style="left:-92.00px;width:200px;text-align:center;top:349.00px;font-size:11.75px;color:#e2e2e2;font-weight:400;transform:scaleX(1.0000);transform-origin:50% 0;-webkit-text-stroke:0">9</div><div class="t" style="left:-92.00px;width:200px;text-align:center;top:366.00px;font-size:11.75px;color:#e2e2e2;font-weight:400;transform:scaleX(1.0000);transform-origin:50% 0;-webkit-text-stroke:0">10</div><div class="t" style="left:-92.00px;width:200px;text-align:center;top:383.00px;font-size:11.75px;color:#e2e2e2;font-weight:400;transform:scaleX(1.0000);transform-origin:50% 0;-webkit-text-stroke:0">11</div><div class="t" style="left:-92.00px;width:200px;text-align:center;top:400.00px;font-size:11.75px;color:#e2e2e2;font-weight:400;transform:scaleX(1.0000);transform-origin:50% 0;-webkit-text-stroke:0">12</div><div class="t" style="left:-92.00px;width:200px;text-align:center;top:417.00px;font-size:11.75px;color:#e2e2e2;font-weight:400;transform:scaleX(1.0000);transform-origin:50% 0;-webkit-text-stroke:0">13</div><div class="t" style="left:-92.00px;width:200px;text-align:center;top:434.00px;font-size:11.75px;color:#e2e2e2;font-weight:400;transform:scaleX(1.0000);transform-origin:50% 0;-webkit-text-stroke:0">14</div><div class="t" style="left:-92.00px;width:200px;text-align:center;top:451.00px;font-size:11.75px;color:#e2e2e2;font-weight:400;transform:scaleX(1.0000);transform-origin:50% 0;-webkit-text-stroke:0">15</div><div style="position:absolute;left:72.9px;top:362.0px;width:57.10px;height:18.60px;box-sizing:border-box;border:1.6px solid #4f6f5d"></div><div style="position:absolute;left:127.0px;top:378.0px;width:3.20px;height:3.00px;background:#2d5a42"></div><div style="position:absolute;left:701.4px;top:194.2px;width:15.60px;height:262.70px;background:#171717"></div><div style="position:absolute;left:701.4px;top:210.6px;width:1.20px;height:246.30px;background:#0a0a0a"></div><svg style="position:absolute;left:705.5px;top:198.5px" width="8" height="6" viewBox="0 0 8 6" fill="none"><path d="M4 0.3 L7.8 5.3 H0.2 Z" fill="#a6a6a6"/></svg><div style="position:absolute;left:705.9px;top:207.5px;width:7.20px;height:160.50px;border-radius:3.6px;background:#a3a3a3"></div><svg style="position:absolute;left:705.5px;top:448.8px" width="8" height="6" viewBox="0 0 8 6" fill="none"><path d="M4 5.3 L7.8 0.3 H0.2 Z" fill="#a6a6a6"/></svg><div style="position:absolute;left:0px;top:456.9px;width:717.00px;height:25.10px;background:#121518"></div><svg style="position:absolute;left:14.5px;top:464px" width="6" height="9" viewBox="0 0 6 9" fill="none"><path d="M5 0.6 L1.2 4.5 L5 8.4" stroke="#e0e0e0" stroke-width="1.1"/></svg><svg style="position:absolute;left:40.5px;top:464px" width="6" height="9" viewBox="0 0 6 9" fill="none"><path d="M1 0.6 L4.8 4.5 L1 8.4" stroke="#e0e0e0" stroke-width="1.1"/></svg><div style="position:absolute;left:64.1px;top:467.5px;width:2.00px;height:2.00px;background:#e8e8e8;border-radius:50%"></div><div style="position:absolute;left:67.39999999999999px;top:467.5px;width:2.00px;height:2.00px;background:#e8e8e8;border-radius:50%"></div><div style="position:absolute;left:70.69999999999999px;top:467.5px;width:2.00px;height:2.00px;background:#e8e8e8;border-radius:50%"></div><div class="t" style="left:90.56px;top:465.00px;font-size:10.75px;color:#ececec;font-weight:400;transform:scaleX(1.0000);transform-origin:0 0;">Sheet3</div><div class="t" style="left:144.05px;top:465.00px;font-size:10.75px;color:#ececec;font-weight:400;transform:scaleX(1.0000);transform-origin:0 0;">Sheet9</div><div class="t" style="left:198.10px;top:465.00px;font-size:10.75px;color:#ececec;font-weight:400;transform:scaleX(1.0000);transform-origin:0 0;">Sheet5</div><div class="t" style="left:251.16px;top:465.00px;font-size:10.75px;color:#ececec;font-weight:400;transform:scaleX(1.0000);transform-origin:0 0;">Sheet10</div><div style="position:absolute;left:134.2px;top:462px;width:1.00px;height:14.00px;background:#4a4a4a"></div><div style="position:absolute;left:188.2px;top:462px;width:1.00px;height:14.00px;background:#4a4a4a"></div><div style="position:absolute;left:242.0px;top:462px;width:1.00px;height:14.00px;background:#4a4a4a"></div><div style="position:absolute;left:300.0px;top:462px;width:1.00px;height:14.00px;background:#4a4a4a"></div><div style="position:absolute;left:358.1px;top:462px;width:1.00px;height:14.00px;background:#4a4a4a"></div><div style="position:absolute;left:300px;top:456.9px;width:60px;height:4px;background:#fff"></div><div style="position:absolute;left:300px;top:456.9px;width:4.1px;height:4.2px;background:#121518;border-top-right-radius:4px"></div><div style="position:absolute;left:355.9px;top:456.9px;width:4.1px;height:4.2px;background:#121518;border-top-left-radius:4px"></div><div style="position:absolute;left:304.1px;top:456.9px;width:51.8px;height:21.5px;background:#fff;border-radius:0 0 3.5px 3.5px"></div><div class="t" style="left:309.67px;top:463.00px;font-size:10.50px;color:#222222;font-weight:400;transform:scaleX(1.0000);transform-origin:0 0;-webkit-text-stroke:0.25px #222">Sheet12</div><div style="position:absolute;left:310.3px;top:475.0px;width:38.50px;height:1.70px;background:#4f8466;border-radius:1px"></div><div style="position:absolute;left:376.5px;top:467.5px;width:2.00px;height:2.00px;background:#e8e8e8;border-radius:50%"></div><div style="position:absolute;left:379.8px;top:467.5px;width:2.00px;height:2.00px;background:#e8e8e8;border-radius:50%"></div><div style="position:absolute;left:383.1px;top:467.5px;width:2.00px;height:2.00px;background:#e8e8e8;border-radius:50%"></div><svg style="position:absolute;left:401.5px;top:463.5px" width="10" height="10" viewBox="0 0 10 10" fill="none"><path d="M4.6 0.5 V9.3 M0.2 4.9 H9" stroke="#e0e0e0" stroke-width="1.1"/></svg><div style="position:absolute;left:430.8px;top:465.6px;width:1.80px;height:1.80px;background:#e0e0e0"></div><div style="position:absolute;left:430.8px;top:469px;width:1.80px;height:1.80px;background:#e0e0e0"></div><div style="position:absolute;left:430.8px;top:472.4px;width:1.80px;height:1.80px;background:#e0e0e0"></div><svg style="position:absolute;left:448.8px;top:465.3px" width="5" height="8" viewBox="0 0 5 8" fill="none"><path d="M4.7 0 V7.6 L0 3.8 Z" fill="#a6a6a6"/></svg><div style="position:absolute;left:458px;top:465.6px;width:220.00px;height:6.60px;border-radius:3.3px;background:#a6a6a6"></div><svg style="position:absolute;left:693.2px;top:465.3px" width="6" height="8" viewBox="0 0 6 8" fill="none"><path d="M0.3 0 V7.6 L5.6 3.8 Z" fill="#a6a6a6"/></svg><div style="position:absolute;left:0px;top:482.0px;width:717.00px;height:18.00px;background:#141414"></div><div style="position:absolute;left:0px;top:482.0px;width:717.00px;height:1.00px;background:#26292b"></div><div class="t" style="left:5.12px;top:488.00px;font-size:8.00px;color:#ececec;font-weight:400;transform:scaleX(1.0000);transform-origin:0 0;">Ready</div><div class="t" style="left:39.22px;top:488.00px;font-size:8.00px;color:#ececec;font-weight:400;transform:scaleX(1.0000);transform-origin:0 0;">Calculate</div><svg style="position:absolute;left:86.5px;top:486px" width="14" height="11" viewBox="0 0 14 11" fill="none"><rect x="0.6" y="0.6" width="11" height="9.5" stroke="#cfcfcf" stroke-width="1"/><rect x="0.6" y="0.6" width="11" height="2.2" fill="#cfcfcf"/><circle cx="10" cy="8" r="3" fill="#171717" stroke="#cfcfcf" stroke-width="1"/><circle cx="10" cy="8" r="1.3" fill="#cfcfcf"/></svg><svg style="position:absolute;left:111px;top:485.5px" width="13" height="12" viewBox="0 0 13 12" fill="none"><circle cx="5.5" cy="1.8" r="1.3" stroke="#dcdcdc" stroke-width="0.9"/><path d="M0.5 3.5 L5.5 5 L10.5 3.5 M5.5 5 V8 L2.5 11.5 M5.5 8 L7.5 10" stroke="#dcdcdc" stroke-width="1"/><path d="M8 8.5 L12 12 M12 8.5 L8 12" stroke="#dcdcdc" stroke-width="0.9"/></svg><div class="t" style="left:125.91px;top:489.00px;font-size:8.25px;color:#ececec;font-weight:700;transform:scaleX(1.0000);transform-origin:0 0;">Accessibility: Investigate</div><div style="position:absolute;left:474px;top:483.0px;width:31.00px;height:17.00px;background:#202020"></div><svg style="position:absolute;left:484px;top:485.3px" width="12" height="11" viewBox="0 0 12 11" fill="none"><rect x="0.6" y="0.6" width="10.4" height="10" rx="1" stroke="#dcdcdc" stroke-width="1"/><path d="M0.6 3.9 H11 M0.6 7.2 H11 M4.1 0.6 V10.6 M7.5 0.6 V10.6" stroke="#dcdcdc" stroke-width="1"/></svg><svg style="position:absolute;left:515.3px;top:485.3px" width="12" height="11" viewBox="0 0 12 11" fill="none"><rect x="0.6" y="0.6" width="10.8" height="10" rx="1" stroke="#dcdcdc" stroke-width="1"/><rect x="3" y="2.6" width="6" height="6" stroke="#dcdcdc" stroke-width="0.8"/></svg><svg style="position:absolute;left:546.8px;top:485.3px" width="12" height="11" viewBox="0 0 12 11" fill="none"><path d="M0.6 0.6 V10.6 H11.4 V0.6 H0.6 M3.6 0.6 V6 H8 V0.6" stroke="#dcdcdc" stroke-width="1"/></svg><div style="position:absolute;left:573px;top:490.6px;width:5.80px;height:1.00px;background:#bdbdbd"></div><div style="position:absolute;left:583.4px;top:490.5px;width:78.40px;height:1.20px;background:#9a9a9a"></div><div style="position:absolute;left:620.2px;top:485.7px;width:4.80px;height:9.20px;background:#bdbdbd;border-radius:1px"></div><svg style="position:absolute;left:665.8px;top:487.8px" width="7" height="7" viewBox="0 0 7 7" fill="none"><path d="M3.4 0 V6.8 M0 3.4 H6.8" stroke="#cfcfcf" stroke-width="1"/></svg><div class="t" style="left:681.80px;top:489.00px;font-size:8.25px;color:#e0e0e0;font-weight:400;transform:scaleX(1.0000);transform-origin:0 0;">100%</div>
</body></html>
